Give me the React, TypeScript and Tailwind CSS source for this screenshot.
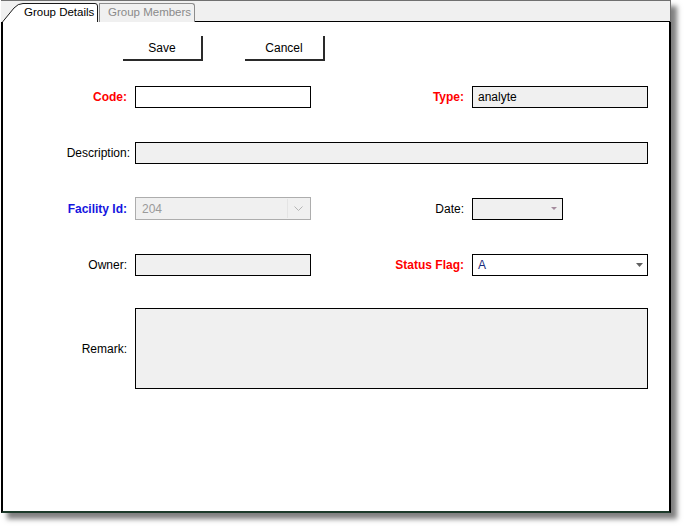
export default function App() {
  return (
    <div className="w-[686px] h-[529px] bg-white text-[12px] text-black" style={{ fontFamily: '"Liberation Sans", Arial, sans-serif' }}>
      <div className="ml-[1px] w-[670px] h-[513px] flex flex-col border-t border-[#707070] shadow-[6px_6px_5px_rgba(0,0,0,0.5)]">
        {/* tab strip */}
        <div className="h-[21px] bg-[#f0f0f0] flex items-end border-r border-[#707070] text-[11.5px]">
          <div className="relative w-[97px] h-[20px] ml-[1px]">
            <svg className="absolute inset-0" width="97" height="20" viewBox="0 0 97 20">
              <path d="M0.5 20 L12 6 Q16 1.5 21 1.5 L93 1.5 Q95.5 1.5 95.5 4 L95.5 20" fill="#ffffff" stroke="#1a1a1a" strokeWidth="1" />
            </svg>
            <span className="absolute left-[22px] top-[3px] leading-[14px] whitespace-nowrap">Group Details</span>
          </div>
          <div className="flex-1 h-[20px] flex items-end">
            <div className="w-[96px] h-[19px] bg-[#f0f0f0] border border-b-0 border-[#8c8c8c] rounded-tr-[3px] text-[#8a8a8a] pl-[8px] leading-[17px] whitespace-nowrap overflow-hidden">
              Group Members
            </div>
            <div className="flex-1 h-px bg-black" />
          </div>
        </div>

        {/* content */}
        <div className="flex-1 bg-white border-l-2 border-r-2 border-black border-b-2 border-b-[#1c3a2a] flex flex-col">
          <div className="flex mt-[14px] ml-[120px] gap-[42px]">
            <button className="w-[80px] h-[25px] bg-white border-r-2 border-b-2 border-[#2a2a2a] pt-[1px]">Save</button>
            <button className="w-[80px] h-[25px] bg-white border-r-2 border-b-2 border-[#2a2a2a] pt-[1px]">Cancel</button>
          </div>

          {/* Code / Type */}
          <div className="flex items-center mt-[25px] h-[22px]">
            <label className="w-[124px] text-right font-bold text-[#ff0000]">Code:</label>
            <div className="ml-[8px] w-[176px] h-[22px] border border-black bg-white" />
            <label className="w-[153px] text-right font-bold text-[#ff0000]">Type:</label>
            <div className="ml-[8px] w-[176px] h-[22px] border border-black bg-[#f0f0f0] pl-[5px] leading-[20px]">analyte</div>
          </div>

          {/* Description */}
          <div className="flex items-center mt-[34px] h-[22px]">
            <label className="w-[127px] text-right">Description:</label>
            <div className="ml-[5px] w-[513px] h-[22px] border border-black bg-[#f0f0f0]" />
          </div>

          {/* Facility / Date */}
          <div className="flex items-center mt-[33px] h-[23px]">
            <label className="w-[124px] text-right font-bold text-[#1515e0]">Facility Id:</label>
            <div className="ml-[8px] w-[176px] h-[23px] border border-[#adadad] bg-[#f0f0f0] flex items-center">
              <span className="flex-1 pl-[6px] text-[#9a9a9a]">204</span>
              <div className="w-[22px] h-[19px] mr-[1px] border-l border-[#e4e4e4] flex items-center justify-center">
                <svg width="9" height="6" viewBox="0 0 9 6">
                  <path d="M0.5 0.5 L4.5 4.5 L8.5 0.5" fill="none" stroke="#b5b5b5" strokeWidth="1" />
                </svg>
              </div>
            </div>
            <label className="w-[153px] text-right">Date:</label>
            <div className="ml-[8px] w-[91px] h-[22px] border border-black bg-[#f0f0f0] flex items-center justify-end pr-[5px]">
              <svg width="6" height="3" viewBox="0 0 6 3">
                <path d="M0 0 L6 0 L3 3 Z" fill="#a58c9e" />
              </svg>
            </div>
          </div>

          {/* Owner / Status */}
          <div className="flex items-center mt-[34px] h-[22px]">
            <label className="w-[124px] text-right">Owner:</label>
            <div className="ml-[8px] w-[176px] h-[22px] border border-black bg-[#f0f0f0]" />
            <label className="w-[153px] text-right font-bold text-[#ff0000]">Status Flag:</label>
            <div className="ml-[8px] w-[176px] h-[22px] border border-black bg-white flex items-center">
              <span className="flex-1 pl-[5px] text-[#1a2a7a]">A</span>
              <svg className="mr-[4px]" width="7" height="4" viewBox="0 0 7 4">
                <path d="M0 0 L7 0 L3.5 4 Z" fill="#606060" />
              </svg>
            </div>
          </div>

          {/* Remark */}
          <div className="flex items-center mt-[32px] h-[81px]">
            <label className="w-[124px] text-right">Remark:</label>
            <div className="ml-[8px] w-[513px] h-[81px] border border-black bg-[#f0f0f0]" />
          </div>
        </div>
      </div>
    </div>
  );
}
